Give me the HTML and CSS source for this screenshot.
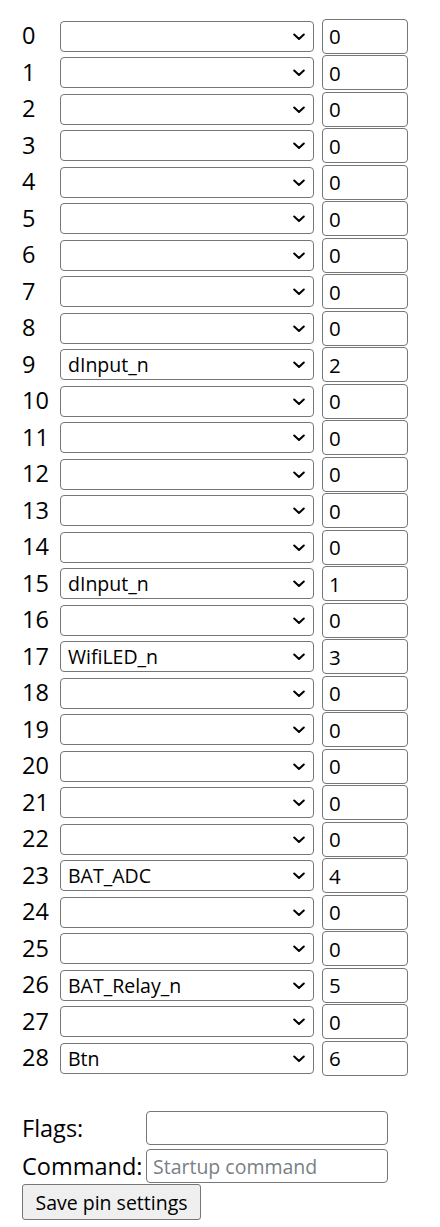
FILE: index.html
```html
<!DOCTYPE html>
<html>
<head>
<meta charset="utf-8">
<link rel="stylesheet" href="styles.css">
</head>
<body>
<div class="page">
  <div class="pins" id="pins"></div>
  <div class="extra">
    <div class="erow">
      <span class="elabel">Flags:</span>
      <input class="einput" type="text" value="">
    </div>
    <div class="erow">
      <span class="elabel">Command:</span>
      <input class="einput" type="text" placeholder="Startup command">
    </div>
  </div>
  <button class="save">Save pin settings</button>
</div>
<script src="script.js"></script>
</body>
</html>
```

FILE: styles.css
```css
html, body {
  margin: 0;
  padding: 0;
  background: #ffffff;
}
body {
  font-family: "Open Sans", "Noto Sans", sans-serif;
  color: #000000;
}
.page {
  padding: 17.75px 0 0 22px;
}
.pins {
  display: flex;
  flex-direction: column;
}
.pin {
  display: grid;
  grid-template-columns: 38px 262px 86px;
  align-items: center;
  height: 36.5px;
}
.num {
  font-size: 23.5px;
  line-height: 1;
}
.selwrap {
  position: relative;
  width: 254px;
  height: 31px;
}
.sel {
  appearance: none;
  -webkit-appearance: none;
  box-sizing: border-box;
  width: 254px;
  height: 31px;
  margin: 0;
  padding: 0 30px 0 7px;
  border: 1px solid #767676;
  border-radius: 4px;
  background: #ffffff;
  font-family: "Open Sans", "Noto Sans", sans-serif;
  font-size: 19.5px;
  color: #000000;
}
.chev {
  position: absolute;
  right: 9px;
  top: 12px;
  width: 12px;
  height: 8px;
  pointer-events: none;
}
.val {
  box-sizing: border-box;
  width: 86px;
  height: 35px;
  margin: 0;
  padding: 0 6px;
  border: 1px solid #767676;
  border-radius: 4px;
  font-family: "Open Sans", "Noto Sans", sans-serif;
  font-size: 20.5px;
  color: #000000;
}
.extra {
  margin-top: 35px;
  display: flex;
  flex-direction: column;
  row-gap: 4px;
}
.erow {
  display: grid;
  grid-template-columns: 124px 242px;
  align-items: center;
  height: 34px;
}
.elabel {
  font-size: 23.5px;
  line-height: 1;
}
.einput {
  box-sizing: border-box;
  width: 242px;
  height: 34px;
  margin: 0;
  padding: 0 6px;
  border: 1px solid #767676;
  border-radius: 4px;
  font-family: "Open Sans", "Noto Sans", sans-serif;
  font-size: 19.5px;
  color: #000000;
}
.einput::placeholder {
  color: #7a7f85;
}
.save {
  display: block;
  box-sizing: border-box;
  width: 179px;
  height: 36px;
  margin: 1px 0 0 0;
  padding: 0;
  border: 1px solid #767676;
  border-radius: 3px;
  background: #efefef;
  font-family: "Open Sans", "Noto Sans", sans-serif;
  font-size: 19.5px;
  color: #000000;
}
```

FILE: script.js
```js
var names = {9: "dInput_n", 15: "dInput_n", 17: "WifiLED_n", 23: "BAT_ADC", 26: "BAT_Relay_n", 28: "Btn"};
var vals = {9: "2", 15: "1", 17: "3", 23: "4", 26: "5", 28: "6"};
var host = document.getElementById("pins");
var html = "";
for (var i = 0; i <= 28; i++) {
  var n = names[i] || "";
  var v = vals[i] || "0";
  html += '<div class="pin"><span class="num">' + i + '</span>' +
    '<div class="selwrap"><select class="sel"><option>' + n + '</option></select>' +
    '<svg class="chev" viewBox="0 0 12 8"><path d="M1.2 1.5 L6 6 L10.8 1.5" fill="none" stroke="#000" stroke-width="2" stroke-linecap="round" stroke-linejoin="round"/></svg></div>' +
    '<input class="val" type="text" value="' + v + '"></div>';
}
host.innerHTML = html;
```
